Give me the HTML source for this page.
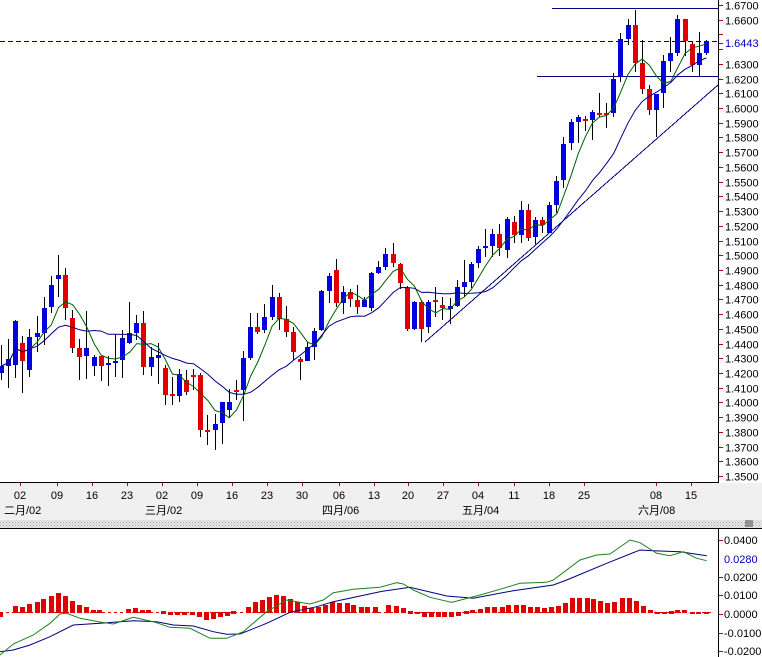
<!DOCTYPE html>
<html><head><meta charset="utf-8">
<style>
html,body{margin:0;padding:0;background:#fff;width:762px;height:657px;overflow:hidden}
svg{display:block;font-family:"Liberation Sans","Noto Sans CJK SC",sans-serif}
rect,line{shape-rendering:crispEdges}
</style></head><body>
<svg id="s" width="762" height="657" xmlns="http://www.w3.org/2000/svg">
<defs>
<pattern id="dots" width="3" height="3" patternUnits="userSpaceOnUse">
<rect width="3" height="3" fill="#e8e8e8"/><rect width="1" height="1" fill="#a0a0a0"/><rect x="1.5" y="1.5" width="1" height="1" fill="#b8b8b8"/>
</pattern>
</defs>
<rect x="0" y="483" width="762" height="37" fill="#f0f0f0"/>
<rect x="0" y="520" width="762" height="8" fill="url(#dots)"/>
<rect x="745" y="520" width="8" height="7" fill="#909090"/>
<line x1="0" y1="482.5" x2="719" y2="482.5" stroke="#000"/>
<line x1="718.5" y1="0" x2="718.5" y2="483" stroke="#000"/>
<line x1="0" y1="528.5" x2="762" y2="528.5" stroke="#000"/>
<line x1="718.5" y1="528" x2="718.5" y2="657" stroke="#000"/>
<g id="g"></g>
</svg>
<script>
var g=document.getElementById('g');var h='';
function L(x1,y1,x2,y2,c,w,d){h+='<line x1="'+x1+'" y1="'+y1+'" x2="'+x2+'" y2="'+y2+'" stroke="'+c+'" stroke-width="'+(w||1)+'"'+(d?' stroke-dasharray="'+d+'"':'')+'/>';}
function T(x,y,t,c,s,a){h+='<text x="'+x+'" y="'+y+'" fill="'+(c||'#000')+'" font-size="'+(s||11)+'"'+(a?' text-anchor="'+a+'"':'')+'>'+t+'</text>';}
for(var k=0;k<=32;k++){var y=Math.round(5+k*14.72)+0.5;var p=(1.67-k*0.01).toFixed(4);
 L(719,y,723,y,'#c00000');
 if(p=='1.6500'||p=='1.6400')continue;
 T(725,y+4,p);}
T(725,47,'1.6443','#0000c0');
L(719,43.5,723,43.5,'#c00000');
var dts=[[20,'02'],[57,'09'],[92,'16'],[127,'23'],[162,'02'],[197,'09'],[232,'16'],[267,'23'],[302,'30'],[339,'06'],[374,'13'],[408,'20'],[443,'27'],[478,'04'],[514,'11'],[549,'18'],[584,'25'],[656,'08'],[691,'15']];
dts.forEach(function(d){L(d[0]+0.5,483,d[0]+0.5,486,'#c00000');T(d[0],499,d[1],'#000',11,'middle');});
T(4,514,'二月/02');T(145,514,'三月/02');T(322,514,'四月/06');T(462,514,'五月/04');T(638,514,'六月/08');
L(0,41.5,718,41.5,'#000050',1,'5,3');
L(552,8.5,718,8.5,'#000080');
L(537,76.5,718,76.5,'#000080');
h+='<line x1="425" y1="342" x2="718" y2="85" stroke="#000080"/>';
var B='b',R='r';
var c=[[366,373,345,380,B],[359,366,339,388,B],[321,365,320,378,B],[343,361,336,393,R],[337,370,329,377,B],[333,337,316,352,B],[308,333,297,345,B],[285,307,276,313,B],[275,279,255,297,B],[275,308,268,320,R],
[318,348,310,353,R],[348,357,339,380,R],[348,356,311,379,B],[357,366,355,376,B],[356,366,357,381,R],[363,364,356,386,B],[361,363,334,377,B],[338,360,330,378,B],[333,343,302,344,B],[323,333,315,340,B],
[323,367,311,375,R],[357,367,347,376,B],[355,358,343,384,B],[368,395,365,405,R],[394,396,377,405,R],[374,396,369,402,B],[380,392,370,395,R],[375,376,369,390,R],[375,430,373,437,R],[430,431,415,445,R],
[424,430,414,450,B],[402,423,402,444,B],[402,410,389,418,B],[390,391,380,400,R],[358,390,351,421,B],[327,358,313,360,B],[327,332,313,334,R],[317,330,304,333,B],[297,317,285,320,B],[297,319,293,330,R],
[319,332,306,337,R],[332,352,327,360,R],[359,362,357,380,R],[347,361,342,360,B],[331,347,328,360,B],[291,330,290,331,B],[276,291,273,303,B],[270,303,259,307,R],[292,303,286,314,B],[292,299,289,307,R],
[300,307,285,314,R],[300,307,297,307,B],[273,308,272,311,B],[267,273,261,274,B],[254,267,248,270,B],[254,263,243,267,R],[264,283,263,289,R],[288,329,286,331,R],[302,329,301,330,B],[302,329,300,342,R],
[302,327,300,333,B],[300,302,287,317,R],[305,308,297,320,R],[306,309,298,324,B],[287,306,280,307,B],[282,287,260,297,B],[264,282,262,288,B],[249,263,246,268,B],[246,247,229,257,B],[234,246,229,257,B],
[234,248,224,256,R],[219,250,217,258,B],[222,235,216,243,R],[210,235,201,243,B],[210,238,204,241,R],[220,237,217,244,B],[220,225,217,233,R],[205,233,202,233,B],[181,205,176,213,B],[144,180,137,188,B],
[122,143,119,150,B],[117,122,115,143,B],[119,120,116,131,R],[112,120,110,140,B],[113,114,93,117,R],[113,114,103,128,R],[79,113,73,117,B],[39,77,33,82,B],[25,39,19,45,B],[25,63,10,72,R],
[63,89,40,94,R],[89,110,85,115,R],[94,110,94,137,B],[61,93,55,108,B],[53,61,37,72,B],[19,53,15,56,B],[19,41,19,56,R],[44,65,42,72,R],[53,65,32,76,B],[41,53,40,55,B]];
var cl=[];
c.forEach(function(d,i){var x=Math.round(1+i*7.12);var col=d[4]==B?'#0000e0':'#e00000';
 L(x+0.5,d[2],x+0.5,d[3],'#000');
 h+='<rect x="'+(x-2)+'" y="'+d[0]+'" width="5" height="'+Math.max(2,d[1]-d[0])+'" fill="'+col+'"/>';
 cl.push(d[4]==B?d[0]:d[1]);});
function ma(n,col){var pts=[];for(var i=0;i<cl.length;i++){var s=0,m=0;for(var j=Math.max(0,i-n+1);j<=i;j++){s+=cl[j];m++;}pts.push((1.5+i*7.12).toFixed(1)+','+(s/m).toFixed(1));}
 h+='<polyline points="'+pts.join(' ')+'" fill="none" stroke="'+col+'" stroke-width="1"/>';}
ma(5,'#006000');ma(13,'#000080');
[[540,'0.0400'],[577,'0.0200'],[595,'0.0100'],[614,'0.0000'],[633,'-0.0100'],[651,'-0.0200']].forEach(function(a){L(719,a[0]+0.5,723,a[0]+0.5,'#c00000');T(724,a[0]+4,a[1]);});
T(724,563,'0.0280','#0000c0');
L(0,612.5,712,612.5,'#e00000',1,'3,3');
var z2=[[0,440],[45,408],[65,410],[88,402],[110,395],[130,387],[152,378],[173,369],[195,378],[215,393],[238,405],[258,410],[278,420],[298,420],[383,416],[405,414],[425,420],[445,421],[490,430],[510,436],[530,436],[553,436],[575,436],[597,442],[617,449],[638,447],[660,442],[680,437],[700,429],[743,410],[765,397],[785,390],[806,380],[828,375],[849,378],[870,388],[890,397],[912,408],[932,413],[955,412],[975,404],[997,396],[1018,400],[1040,400],[1060,405],[1082,412],[1102,412],[1125,410]];
var z3=[[5,405],[25,405],[48,408],[70,413],[90,430],[110,432],[133,442],[153,442],[173,442],[193,442],[213,442],[235,437],[257,430],[277,420],[300,418],[322,410],[343,410],[365,410],[385,405],[407,405],[428,405],[450,410],[470,410],[492,415],[512,412],[533,408],[555,398],[577,385],[598,383],[620,383],[640,388],[660,393],[680,400],[703,395],[725,385],[747,383],[767,393],[789,408],[810,420],[830,432],[852,432],[872,430],[892,420],[913,420],[935,432],[955,432],[977,432]];
function bar(x,zy){x=Math.round(x);var y=Math.round(470+zy/3);var t=Math.min(y,612),b=Math.max(y,613);if(b-t<2){t=611;b=614;}h+='<rect x="'+(x-2)+'" y="'+t+'" width="5" height="'+(b-t)+'" fill="#e00000"/>';}
z2.forEach(function(a){bar(a[0]/3,a[1]);});
z3.forEach(function(a){if(a[0]<15)return;bar(380+a[0]/3,a[1]);});
function pl(arr,ox,col){var p=arr.map(function(a){return (ox+a[0]/3).toFixed(1)+','+(470+a[1]/3).toFixed(1);});h+='<polyline points="'+p.join(' ')+'" fill="none" stroke="'+col+'" stroke-width="1"/>';}
pl([[0,545],[40,540],[90,525],[150,500],[220,465],[300,460],[400,452],[470,455],[520,465],[580,468],[640,485],[680,493],[720,492],[800,460],[870,427],[950,410],[1000,395],[1140,365]],0,'#000080');
pl([[0,555],[40,522],[100,495],[150,460],[180,432],[200,430],[240,445],[300,456],[340,462],[400,442],[460,455],[510,472],[570,475],[630,505],[680,505],[730,485],[800,425],[860,390],[930,402],[970,390],[1000,368],[1060,358],[1140,352]],0,'#208020');
pl([[0,365],[90,352],[200,378],[280,385],[400,362],[520,345],[560,330],[680,280],[780,240],[820,242],[900,245],[980,257]],380,'#000080');
pl([[0,352],[50,338],[70,342],[100,360],[150,382],[215,397],[300,375],[360,358],[420,340],[500,337],[520,330],[600,270],[650,255],[690,252],[750,210],[780,218],[830,250],[870,257],[910,245],[950,265],[980,272]],380,'#208020');
g.innerHTML=h;
</script>
</body></html>
